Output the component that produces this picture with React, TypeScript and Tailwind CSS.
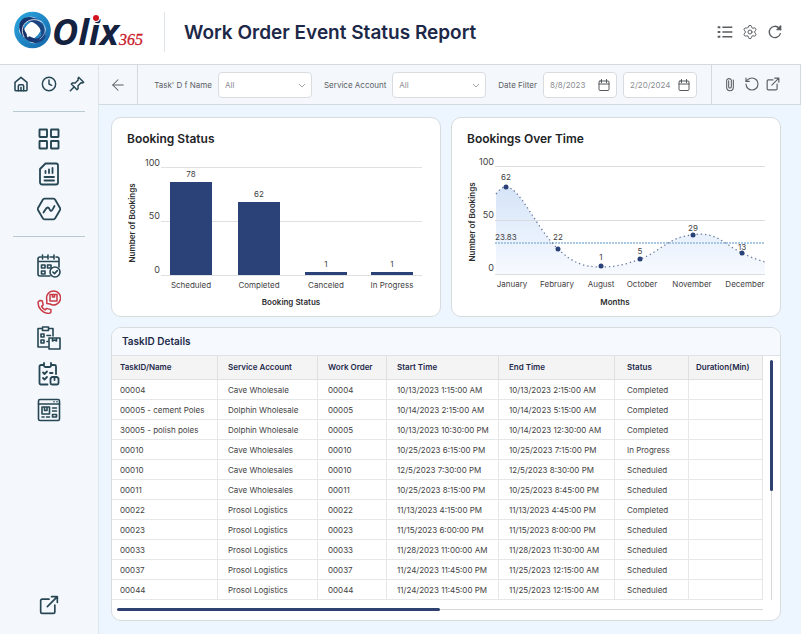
import type { ReactNode } from "react";
import { ArrowLeft, Clock, RotateCcw, Settings } from "lucide-react";

interface Task {
  name: string;
  account: string;
  order: string;
  start: string;
  end: string;
  status: string;
}

const tasks: Task[] = [
  { name: "00004", account: "Cave Wholesale", order: "00004", start: "10/13/2023 1:15:00 AM", end: "10/13/2023 2:15:00 AM", status: "Completed" },
  { name: "00005 - cement Poles", account: "Dolphin Wholesale", order: "00005", start: "10/14/2023 2:15:00 AM", end: "10/14/2023 5:15:00 AM", status: "Completed" },
  { name: "30005 - polish poles", account: "Dolphin Wholesale", order: "00005", start: "10/13/2023 10:30:00 PM", end: "10/14/2023 12:30:00 AM", status: "Completed" },
  { name: "00010", account: "Cave Wholesales", order: "00010", start: "10/25/2023 6:15:00 PM", end: "10/25/2023 7:15:00 PM", status: "In Progress" },
  { name: "00010", account: "Cave Wholesales", order: "00010", start: "12/5/2023 7:30:00 PM", end: "12/5/2023 8:30:00 PM", status: "Scheduled" },
  { name: "00011", account: "Cave Wholesales", order: "00011", start: "10/25/2023 8:15:00 PM", end: "10/25/2023 8:45:00 PM", status: "Scheduled" },
  { name: "00022", account: "Prosol Logistics", order: "00022", start: "11/13/2023 4:15:00 PM", end: "11/13/2023 4:45:00 PM", status: "Completed" },
  { name: "00023", account: "Prosol Logistics", order: "00023", start: "11/15/2023 6:00:00 PM", end: "11/15/2023 8:00:00 PM", status: "Scheduled" },
  { name: "00033", account: "Prosol Logistics", order: "00033", start: "11/28/2023 11:00:00 AM", end: "11/28/2023 11:30:00 AM", status: "Scheduled" },
  { name: "00037", account: "Prosol Logistics", order: "00037", start: "11/24/2023 11:45:00 PM", end: "11/25/2023 12:15:00 AM", status: "Scheduled" },
  { name: "00044", account: "Prosol Logistics", order: "00044", start: "11/24/2023 11:45:00 PM", end: "11/25/2023 12:15:00 AM", status: "Scheduled" },
];

const bars = [
  { label: "Scheduled", value: 78, x: 58, y: 34 },
  { label: "Completed", value: 62, x: 126, y: 54 },
  { label: "Canceled", value: 1, x: 193, y: 124 },
  { label: "In Progress", value: 1, x: 259, y: 124 },
];

const points = [
  { label: "January", value: 62, x: 54, y: 39, labelX: 60, valueY: 32 },
  { label: "February", value: 22, x: 106, y: 101, labelX: 105, valueY: 92 },
  { label: "August", value: 1, x: 149, y: 118, labelX: 149, valueY: 112 },
  { label: "October", value: 5, x: 188, y: 111, labelX: 190, valueY: 106 },
  { label: "November", value: 29, x: 241, y: 87, labelX: 240, valueY: 83 },
  { label: "December", value: 13, x: 290, y: 105, labelX: 293, valueY: 102 },
];

const curve =
  "M44 46 C47 42 50 39 54 39 C68 39 84 80 106 101 C120 114 130 119 149 119 C165 119 175 116 188 111 C208 104 218 88 241 87 C263 82 276 99 290 105 C298 109 306 112 313 114";

const Icon = ({ size = "size-6", width = 1.7, children }: { size?: string; width?: number; children: ReactNode }) => (
  <svg
    viewBox="0 0 24 24"
    className={size}
    fill="none"
    stroke="currentColor"
    strokeWidth={width}
    strokeLinecap="round"
    strokeLinejoin="round"
    aria-hidden="true"
  >
    {children}
  </svg>
);

const HomeIcon = () => (
  <Icon size="size-4" width={2.3}>
    <path d="M3 9.5 12 2l9 7.5V21a1 1 0 0 1-1 1H4a1 1 0 0 1-1-1z" />
    <path d="M8 22v-7a2 2 0 0 1 2-2h4a2 2 0 0 1 2 2v7M12 17v5" />
  </Icon>
);

const PinIcon = () => (
  <Icon size="size-4" width={2.2}>
    <path d="m14.5 2 7.5 7.5-2 1-2-.3-4.5 4.5.2 4-1.7 1.8L3.5 12l1.8-1.7 4 .2L13.8 6l-.3-2z" />
    <path d="M7.5 16.5 2 22" />
  </Icon>
);

const OpenIcon = ({ size, width }: { size: string; width: number }) => (
  <Icon size={size} width={width}>
    <path d="M12 5H4a2 2 0 0 0-2 2v13a2 2 0 0 0 2 2h13a2 2 0 0 0 2-2v-8" />
    <path d="M15 2h7v7M22 2 10 14" />
  </Icon>
);

const CalendarIcon = () => (
  <Icon size="size-3" width={2}>
    <rect x="2" y="4" width="20" height="19" rx="2" />
    <path d="M2 10h20M7 1v6M17 1v6" />
  </Icon>
);

const reportLinks = [
  {
    label: "Dashboard",
    icon: (
      <Icon width={1.9}>
        <rect x="2.5" y="2.5" width="7.5" height="7.5" rx=".4" />
        <rect x="14" y="2.5" width="7.5" height="7.5" rx=".4" />
        <rect x="2.5" y="14" width="7.5" height="7.5" rx=".4" />
        <rect x="14" y="14" width="7.5" height="7.5" rx=".4" />
      </Icon>
    ),
  },
  {
    label: "Reports",
    icon: (
      <Icon width={1.8}>
        <path d="M8.5 1.5H19a2 2 0 0 1 2 2v17a2 2 0 0 1-2 2H5a2 2 0 0 1-2-2V7z" />
        <path d="M8.5 11V9M12 11V7.5M15.5 11V6M7.5 15H17M7.5 18.5H17" />
      </Icon>
    ),
  },
  {
    label: "Analytics",
    icon: (
      <Icon width={1.8}>
        <path d="M7.5 1.7h9a2 2 0 0 1 1.700 1L23 11a2 2 0 0 1 0 2l-4.800 8.300a2 2 0 0 1-1.700 1h-9a2 2 0 0 1-1.700-1L1 13a2 2 0 0 1 0-2l4.800-8.300a2 2 0 0 1 1.700-1z" />
        <path d="M6.5 15.5c1.5-2 2.5-5 4.300-5s1.800 3.500 3.200 3.500 2.300-3 3.500-5" />
      </Icon>
    ),
  },
];

const bookingLinks = [
  {
    label: "Schedule",
    active: false,
    icon: (
      <Icon width={1.6}>
        <path d="M13 22H3a2 2 0 0 1-2-2V5a2 2 0 0 1 2-2h1M7 3h3M13 3h3M19 3h1a2 2 0 0 1 2 2v8M1 7.5h21M5.5 1v4M11 1v4M17 1v4" />
        <path d="M4.5 11H8v3H4.500zM10.500 11H14v3h-3.500zM4.500 17H8v3H4.500z" />
        <circle cx="18" cy="18" r="5" />
        <path d="m15.800 18 1.700 1.600 2.800-3" />
      </Icon>
    ),
  },
  {
    label: "Booking calls",
    active: true,
    icon: (
      <Icon width={1.5}>
        <path d="M9.8 13.5V9.800A7 7 0 1 1 13 14z" />
        <path d="M13 4.5h7V11h-7zM15.500 4.500V7h2V4.500" />
        <path d="M1 12.5c0-1 .8-1.500 2-2l2.200.2 1 4.200-1.600 1.500c.8 1.700 1.800 2.700 3.500 3.500l1.500-1.500 4.400 1.200-.2 2.800c-.5.800-1.500 1-2.500 1C5 23 1 18 1 12.500z" />
      </Icon>
    ),
  },
  {
    label: "Work orders",
    active: false,
    icon: (
      <Icon width={1.6}>
        <path d="M11 21H1V2.500h4.500M11.500 2.500H16V10M5.500 1h6v3.500h-6z" />
        <path d="M4 8h3v3H4zM4 14h3v3H4zM10 9.500h3.500M10 15.500h1" />
        <path d="M12 12h11v11H12zM15.500 12v3l2-1 2 1v-3" />
      </Icon>
    ),
  },
  {
    label: "Checklists",
    active: false,
    icon: (
      <Icon width={1.8}>
        <path d="M10.500 22.500H4A1.500 1.500 0 0 1 2.500 21V4.500A1.500 1.500 0 0 1 4 3h3M14 3h3.500A1.500 1.500 0 0 1 19 4.500V12M7 1v2.500A1.500 1.500 0 0 0 8.500 5h4A1.500 1.500 0 0 0 14 3.500V1" />
        <path d="m6 10.500 1.500 1.500L10 9.500M6 16l1.500 1.500L10 15M13 11h2.500" />
        <path d="M13.500 16.500 15 15h5l1.500 1.500V21a1.500 1.500 0 0 1-1.500 1.500h-5a1.500 1.500 0 0 1-1.500-1.500zM17.500 15v3" />
      </Icon>
    ),
  },
  {
    label: "Product page",
    active: false,
    icon: (
      <Icon width={1.6}>
        <rect x="1.5" y="1.5" width="21" height="21" rx="1.5" />
        <path d="M1.5 6h21M17 3.800h.1M20 3.800h.1M5 9h7.500v7H5zM7.500 9v3.500H10V9M5 19h2M9.500 19h3M15.500 10h4M15.500 13h4M15.500 16.500h4V19h-4z" />
      </Icon>
    ),
  },
];

const Logo = () => (
  <svg viewBox="0 0 132 60" className="h-[60px] w-[132px] overflow-visible" role="img" aria-label="Olix 365">
    <defs>
      <linearGradient id="ring" x1="0" y1="0" x2="1" y2="1">
        <stop offset="0" stopColor="#2ba9e1" />
        <stop offset="1" stopColor="#1464a8" />
      </linearGradient>
      <linearGradient id="navy" x1="0" y1="1" x2="1" y2="0">
        <stop offset="0" stopColor="#14295f" />
        <stop offset="1" stopColor="#1c4c8c" />
      </linearGradient>
    </defs>
    <circle cx="18.500" cy="28" r="18.300" fill="url(#ring)" />
    <ellipse cx="18.500" cy="28" rx="14" ry="12.500" transform="rotate(40 18.500 28)" fill="#fff" />
    <g fill="none" strokeLinecap="round">
      <ellipse cx="18.500" cy="28" rx="12.500" ry="8.800" transform="rotate(-48 18.500 28)" stroke="#2584c2" strokeWidth="3" />
      <ellipse cx="18.500" cy="28" rx="12.500" ry="9" transform="rotate(42 18.500 28)" stroke="url(#navy)" strokeWidth="4.500" />
      <path d="M10 35c-4-7-1-15 7-17 4-1 8 0 11 2" stroke="#fff" strokeWidth=".8" />
      <path d="M28 20c5 5 4 13-2 17" stroke="#9cc9e6" strokeWidth=".7" />
    </g>
    <path d="M12.500 28c0-4 3-6 6-6 4 0 6 3 6 6s-3 6-6 6c-2 0-4 0-5 1.500-1-2-1-5-1-7.500z" fill="#fff" />
    <text x="38" y="43" fontFamily="'Open Sans', sans-serif" fontSize="36" fontWeight="700" fontStyle="italic" fill="#14213f">
      Olix
    </text>
    <circle cx="82" cy="16" r="4" fill="#fff" />
    <circle cx="82" cy="16" r="3" fill="#d3131f" />
    <text x="105" y="43" fontFamily="'Liberation Serif', serif" fontSize="16" fontStyle="italic" fill="#c9202b" stroke="#c9202b" strokeWidth=".3">
      365
    </text>
  </svg>
);

const Header = () => (
  <header className="flex h-[65px] items-center border-b border-[#d2dade] bg-white pl-[14px] pr-[18px]">
    <Logo />
    <div className="ml-[18px] mr-[19px] h-10 w-px bg-[#dde3e6]" />
    <h1 className="flex-1 whitespace-nowrap pt-[2px] text-[19px] font-semibold text-[#1d2848]">Work Order Event Status Report</h1>
    <div className="flex items-center gap-[9px] text-[#5a5d60]">
      <button aria-label="List view">
        <Icon size="size-4" width={2.2}>
          <path d="M8 5h15M8 12h15M8 19h15" strokeLinecap="butt" />
          <path d="M1 3.500h4v3H1zM1 10.500h4v3H1zM1 17.500h4v3H1z" fill="currentColor" stroke="none" />
        </Icon>
      </button>
      <button aria-label="Settings">
        <Settings className="size-4" strokeWidth={1.5} />
      </button>
      <button aria-label="Refresh">
        <Icon size="size-4" width={2}>
          <path d="M20 14.500A8.500 8.500 0 1 1 18 6l2.500 2.500" />
          <path d="M20.500 3v5.500H15z" fill="currentColor" />
        </Icon>
      </button>
    </div>
  </header>
);

const Sidebar = () => (
  <nav className="flex w-[99px] shrink-0 flex-col items-center border-r border-[#dce5ea] bg-[#f4f8fd] pb-[19px] pt-[11px] text-[#264653]">
    <div className="flex gap-3">
      <button aria-label="Home"><HomeIcon /></button>
      <button aria-label="Recent"><Clock className="size-4" strokeWidth={2.2} /></button>
      <button aria-label="Pinned"><PinIcon /></button>
    </div>
    <hr className="mt-[19px] w-[72px] border-[#b9c9d2]" />
    <div className="mt-[15px] flex flex-col gap-[11px]">
      {reportLinks.map((item) => (
        <a key={item.label} href="#" aria-label={item.label}>{item.icon}</a>
      ))}
    </div>
    <hr className="mt-[15px] w-[72px] border-[#b9c9d2]" />
    <div className="mt-[17px] flex flex-col gap-3">
      {bookingLinks.map((item) => (
        <a key={item.label} href="#" aria-label={item.label} className={item.active ? "text-[#c93a45]" : ""}>
          {item.icon}
        </a>
      ))}
    </div>
    <a href="#" aria-label="Open in new window" className="mt-auto">
      <OpenIcon size="size-5" width={2} />
    </a>
  </nav>
);

const FilterSelect = ({ id, label }: { id: string; label: string }) => (
  <div className="flex items-center gap-[6px]">
    <label htmlFor={id} className="whitespace-nowrap">{label}</label>
    <div className="relative">
      <select id={id} className="h-[26px] w-[94px] appearance-none rounded border border-[#d9dcdf] bg-white px-[6px] text-[8px] text-[#8b8e92]">
        <option>All</option>
      </select>
      <svg viewBox="0 0 8 8" className="pointer-events-none absolute right-[6px] top-[9px] size-2" fill="none" stroke="#a2a5a8">
        <path d="m1 3 3 3 3-3" />
      </svg>
    </div>
  </div>
);

const DateField = ({ id, label, value }: { id: string; label: string; value: string }) => (
  <div className="flex h-[26px] w-[74px] items-center rounded border border-[#d9dcdf] bg-white pl-[6px] pr-[6px] text-[#55585c]">
    <input id={id} aria-label={label} defaultValue={value} className="w-full min-w-0 flex-1 text-[8px] text-[#8b8e92] outline-none" />
    <button aria-label={`Pick ${label}`}><CalendarIcon /></button>
  </div>
);

const Toolbar = () => (
  <div className="flex h-10 items-stretch border-b border-r border-[#d2dade] bg-[#f4f8fd] text-[8px] text-[#5b5e62]">
    <button aria-label="Back" className="flex w-[39px] items-center justify-center border-r border-[#d2dade]">
      <ArrowLeft className="size-[18px]" strokeWidth={1.4} />
    </button>
    <div className="flex flex-1 items-center justify-end gap-3 pr-[14px]">
      <FilterSelect id="task" label="Task' D f Name" />
      <FilterSelect id="account" label="Service Account" />
      <div className="flex items-center gap-[6px]">
        <label htmlFor="from" className="whitespace-nowrap">Date Filter</label>
        <DateField id="from" label="start date" value="8/8/2023" />
        <DateField id="to" label="end date" value="2/20/2024" />
      </div>
    </div>
    <div className="flex w-[89px] items-center justify-center gap-[6px] border-l border-[#d2dade] pb-[2px] pr-[10px]">
      <button aria-label="Attachments">
        <Icon size="size-4" width={1.6}>
          <path d="M17 6v11a5 5 0 0 1-10 0V6a4 4 0 0 1 7 0v10a2 2 0 0 1-4 0V7" />
        </Icon>
      </button>
      <button aria-label="Undo"><RotateCcw className="size-4" strokeWidth={1.7} /></button>
      <button aria-label="Open report"><OpenIcon size="size-[14px]" width={2} /></button>
    </div>
  </div>
);

const ChartCard = ({ title, children }: { title: string; children: ReactNode }) => (
  <section className="min-w-0 flex-1 rounded-[10px] border border-[#d8dcde] bg-white pt-3">
    <h2 className="pl-[15px] text-[12px] font-semibold leading-[18px] text-[#222426]">{title}</h2>
    {children}
  </section>
);

const BookingStatusChart = () => (
  <svg viewBox="0 0 328 168" className="block h-auto w-full" fontSize="8" fill="#3f4244" textAnchor="middle">
    <g stroke="#dfe0e1">
      <path d="M49 19.500h261M49 73.500h261M49 127.500h261" />
    </g>
    <g fontSize="9" textAnchor="end">
      <text x="48" y="18">100</text>
      <text x="48" y="71">50</text>
      <text x="48" y="125">0</text>
    </g>
    {bars.map((bar) => (
      <g key={bar.label}>
        <rect x={bar.x} y={bar.y} width="42" height={127 - bar.y} fill="#2b4279" />
        <text x={bar.x + 21} y={bar.y - 5}>{bar.value}</text>
        <text x={bar.x + 21} y="140">{bar.label}</text>
      </g>
    ))}
    <g fontWeight="600" fill="#2c2e30">
      <text x="179" y="157">Booking Status</text>
      <text transform="translate(23 75) rotate(-90)">Number of Bookings</text>
    </g>
  </svg>
);

const BookingsOverTimeChart = () => (
  <svg viewBox="0 0 328 168" className="block h-auto w-full" fontSize="8" fill="#3f4244" textAnchor="middle">
    <defs>
      <linearGradient id="area" x1="0" y1="0" x2="0" y2="1">
        <stop offset="0" stopColor="#d5e4f8" />
        <stop offset="1" stopColor="#f7faff" />
      </linearGradient>
    </defs>
    <path d={`${curve} V126 H44 Z`} fill="url(#area)" />
    <path d="M43 18.500h270M43 72.500h270M43 126.500h270" stroke="#dadde0" />
    <path d="M43 95h270" stroke="#a8c8e4" strokeWidth="2" strokeDasharray="2 1" />
    <path d={curve} fill="none" stroke="#66769c" strokeWidth="1.3" strokeDasharray="1.3 3" />
    <g fontSize="9" textAnchor="end">
      <text x="42" y="17">100</text>
      <text x="42" y="70">50</text>
      <text x="42" y="123">0</text>
    </g>
    <text x="43" y="92" textAnchor="start">23.83</text>
    {points.map((point) => (
      <g key={point.label}>
        <circle cx={point.x} cy={point.y} r="2.5" fill="#2b4279" />
        <text x={point.x} y={point.valueY}>{point.value}</text>
        <text x={point.labelX} y="139">{point.label}</text>
      </g>
    ))}
    <g fontWeight="600" fill="#2c2e30">
      <text x="163" y="157">Months</text>
      <text transform="translate(23 74) rotate(-90)">Number of Bookings</text>
    </g>
  </svg>
);

const cell = "border-b border-r border-[#e6e7e8] pl-[10px]";
const headCell = "border-b border-r border-[#dfe0e2] pb-[2px] pl-[10px] font-semibold";

const TaskTable = () => (
  <section className="overflow-hidden rounded-[10px] border border-[#d8dcde] bg-white">
    <h2 className="border-b border-[#dfe2e4] bg-[#f6fafe] pl-[10px] text-[10px] font-semibold leading-[27px] text-[#1f2a4b]">
      TaskID Details
    </h2>
    <div className="flex">
      <table className="flex-1 table-fixed border-separate border-spacing-0 whitespace-nowrap text-left text-[8px] text-[#3f4244]">
        <colgroup>
          <col className="w-[106px]" />
          <col className="w-[100px]" />
          <col className="w-[69px]" />
          <col className="w-[112px]" />
          <col className="w-[116px]" />
          <col className="w-[74px]" />
          <col className="w-[74px]" />
        </colgroup>
        <thead>
          <tr className="h-6 bg-[#f4f4f5] text-[#1f2a4b]">
            <th className="border-b border-r border-[#dfe0e2] pb-[2px] pl-2 font-semibold">TaskID/Name</th>
            <th className={headCell}>Service Account</th>
            <th className={headCell}>Work Order</th>
            <th className={headCell}>Start Time</th>
            <th className={headCell}>End Time</th>
            <th className="border-b border-r border-[#dfe0e2] pb-[2px] pl-3 font-semibold">Status</th>
            <th className="border-b border-r border-[#dfe0e2] pb-[2px] pl-[7px] font-semibold">Duration(Min)</th>
          </tr>
        </thead>
        <tbody>
          {tasks.map((task, index) => (
            <tr key={index} className="h-5">
              <td className="border-b border-r border-[#e6e7e8] pl-2">{task.name}</td>
              <td className={cell}>{task.account}</td>
              <td className={cell}>{task.order}</td>
              <td className={cell}>{task.start}</td>
              <td className={cell}>{task.end}</td>
              <td className="border-b border-r border-[#e6e7e8] pl-3">{task.status}</td>
              <td className={cell} />
            </tr>
          ))}
        </tbody>
      </table>
      {/* Vertical scroll indicator */}
      <div className="flex w-[17px] flex-col items-center pt-1">
        <div className="h-[131px] w-[3px] rounded-full bg-[#2f4170]" />
        <div className="w-px flex-1 bg-[#d5d7d9]" />
      </div>
    </div>
    {/* Horizontal scroll indicator */}
    <div className="flex h-5 items-center pb-px pl-[5px] pr-[17px]">
      <div className="h-[3px] w-1/2 rounded-full bg-[#2f4170]" />
      <div className="h-px flex-1 bg-[#d5d7d9]" />
    </div>
  </section>
);

const App = () => (
  <div className="flex min-h-screen flex-col bg-[#edf6fe] font-['Inter',sans-serif]">
    <Header />
    <div className="flex flex-1">
      <Sidebar />
      <div className="flex min-w-0 flex-1 flex-col">
        <Toolbar />
        <main className="flex flex-col gap-[10px] pb-3 pl-3 pr-5 pt-3">
          <div className="flex gap-[10px]">
            <ChartCard title="Booking Status"><BookingStatusChart /></ChartCard>
            <ChartCard title="Bookings Over Time"><BookingsOverTimeChart /></ChartCard>
          </div>
          <TaskTable />
        </main>
      </div>
    </div>
  </div>
);

export default App;
